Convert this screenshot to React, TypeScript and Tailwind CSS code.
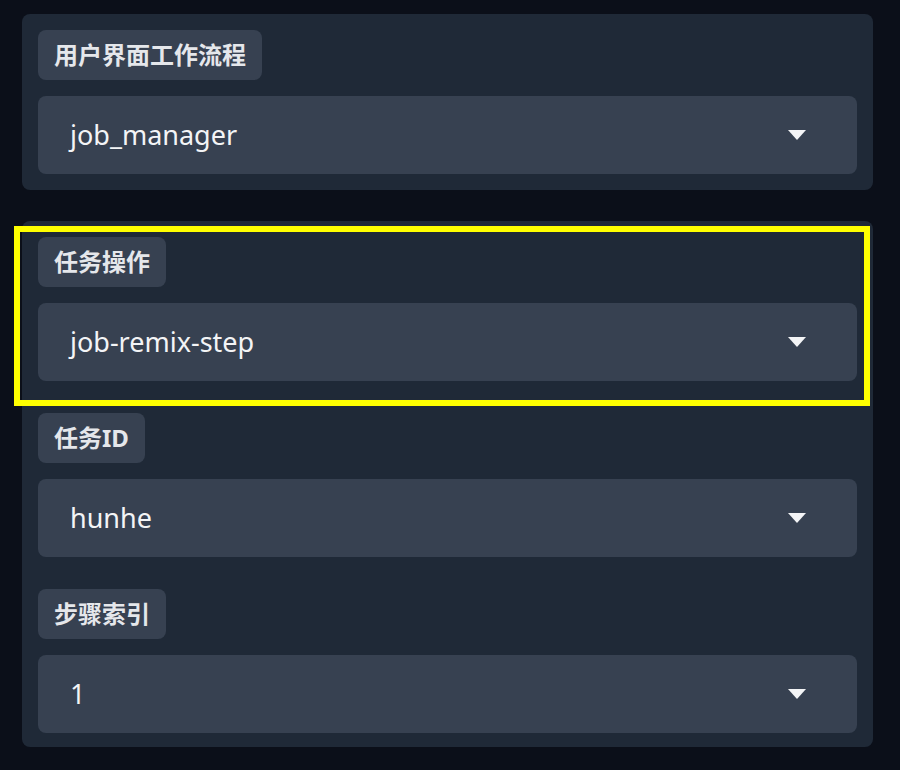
import React from 'react';

const Caret = () => (
  <svg width="18" height="10" viewBox="0 0 18 10" className="shrink-0">
    <path d="M0 0 L18 0 L9 10 Z" fill="#f3f4f6" />
  </svg>
);

const Field = ({ label, value }: { label: string; value: string }) => (
  <div className="flex flex-col gap-4">
    <div className="self-start h-[50px] flex items-center px-4 rounded-lg bg-[#374151] text-[#e5e7eb] text-[24px] font-bold leading-none">
      {label}
    </div>
    <div className="h-[78px] flex items-center justify-between pl-8 pr-[51px] rounded-lg bg-[#374151]">
      <span className="text-[27px] text-[#f3f4f6]">{value}</span>
      <Caret />
    </div>
  </div>
);

const App = () => {
  return (
    <div
      className="w-[900px] h-[770px] bg-[#0b0f19] pt-[14px] pl-[22px] pr-[27px] flex flex-col gap-[31px]"
      style={{ fontFamily: '"Noto Sans", "Noto Sans CJK SC", sans-serif' }}
    >
      <div className="bg-[#1f2937] rounded-lg p-4">
        <Field label="用户界面工作流程" value="job_manager" />
      </div>

      <div className="relative bg-[#1f2937] rounded-lg px-4 pt-4 pb-[14px] flex flex-col gap-8">
        {/* highlight box over the first field */}
        <div className="absolute left-[-8px] top-[5px] w-[856px] h-[180px] border-[6px] border-[#ffff00] pointer-events-none" />
        <Field label="任务操作" value="job-remix-step" />
        <Field label="任务ID" value="hunhe" />
        <Field label="步骤索引" value="1" />
      </div>
    </div>
  );
};

export default App;
